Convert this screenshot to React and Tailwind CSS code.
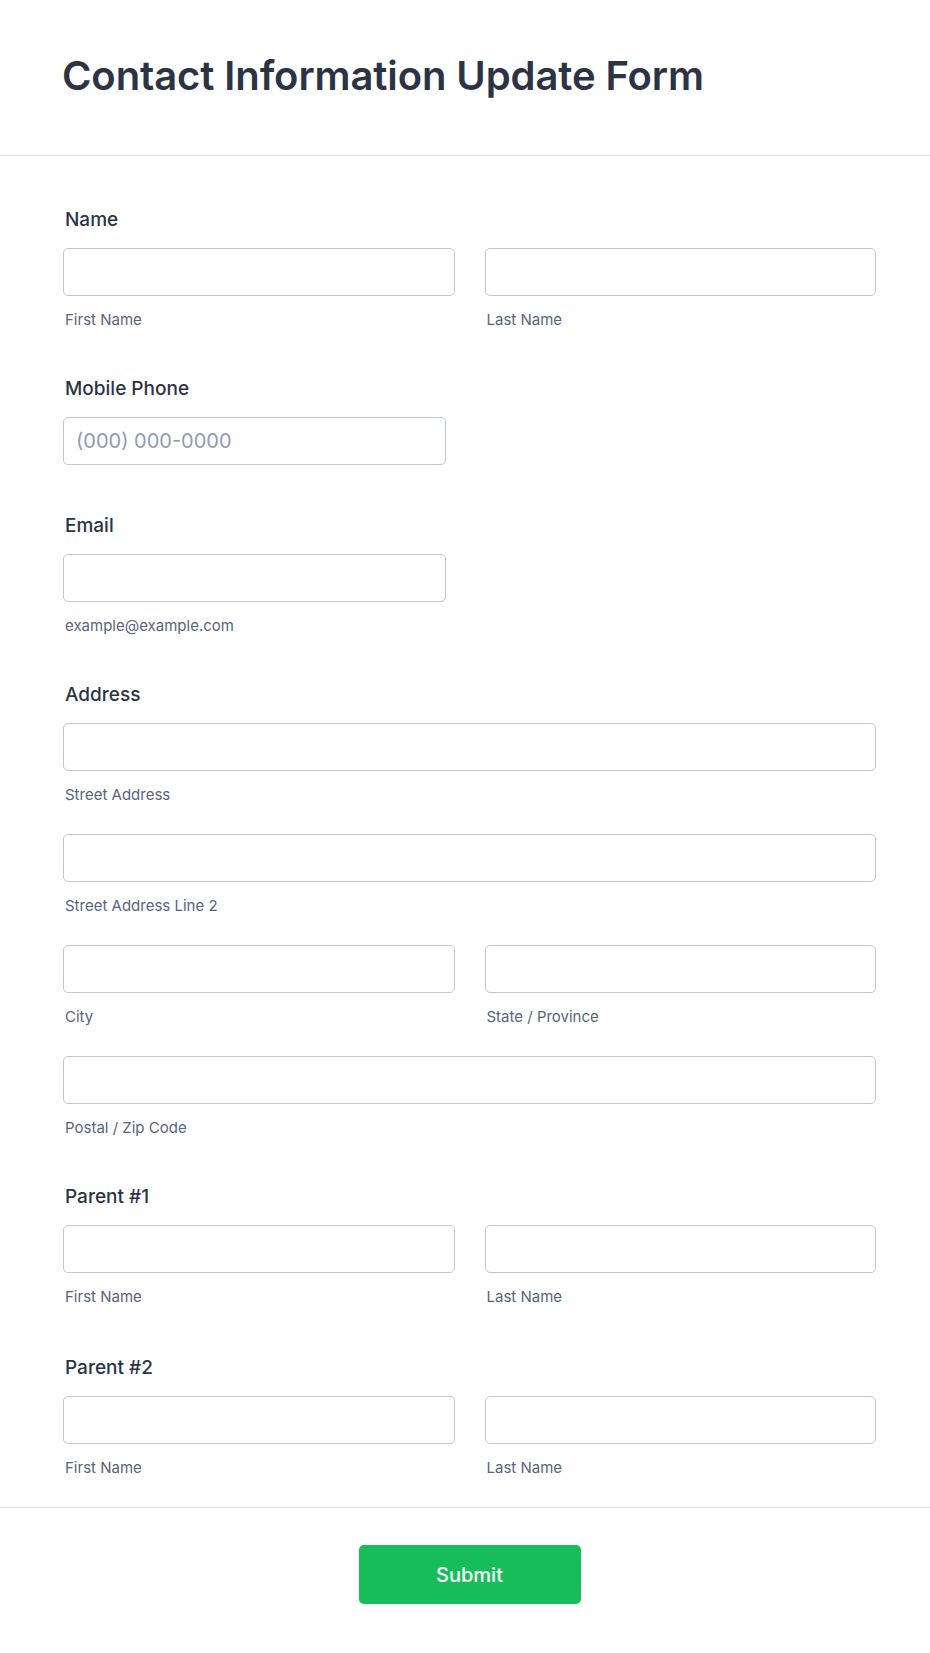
import React from "react";

const TextInput = ({ placeholder, className = "" }) => (
  <input
    type="text"
    placeholder={placeholder}
    className={`block h-[48px] w-full rounded-[5px] border border-[#bfc6d4] bg-white px-3 text-[20px] text-[#2c3345] placeholder:text-[#8f9bb3] outline-none ${className}`}
  />
);

const SubLabel = ({ children }) => (
  <div className="mt-[14px] pl-[2px] text-[15px] leading-[20px] text-[#57647e]">
    {children}
  </div>
);

const Label = ({ children }) => (
  <div className="mb-[16px] pt-[3px] pl-[2px] text-[19px] font-medium leading-[24px] text-[#2c3345]">
    {children}
  </div>
);

const TwoCol = ({ left, right }) => (
  <div className="grid grid-cols-2 gap-x-[30px]">
    <div>
      <TextInput />
      <SubLabel>{left}</SubLabel>
    </div>
    <div>
      <TextInput />
      <SubLabel>{right}</SubLabel>
    </div>
  </div>
);

const App = () => {
  return (
    <div
      className="min-h-screen w-full bg-white"
      style={{ fontFamily: "Inter, 'Noto Sans', sans-serif" }}
    >
      <header className="border-b border-[#e3e5ee] pl-[62px] pr-[54px] pt-[52px] pb-[55px]">
        <h1 className="text-[40px] font-semibold leading-[48px] tracking-[-0.1px] text-[#2c3345]">
          Contact Information Update Form
        </h1>
      </header>

      <form
        className="flex flex-col gap-[44px] pl-[63px] pr-[54px] pt-[49px] pb-[29px]"
        onSubmit={(e) => e.preventDefault()}
      >
        <section>
          <Label>Name</Label>
          <TwoCol left="First Name" right="Last Name" />
        </section>

        <section>
          <Label>Mobile Phone</Label>
          <TextInput placeholder="(000) 000-0000" className="!w-[383px]" />
        </section>

        <section className="mt-[2px]">
          <Label>Email</Label>
          <TextInput className="!w-[383px]" />
          <SubLabel>example@example.com</SubLabel>
        </section>

        <section>
          <Label>Address</Label>
          <div className="flex flex-col gap-[29px]">
            <div>
              <TextInput />
              <SubLabel>Street Address</SubLabel>
            </div>
            <div>
              <TextInput />
              <SubLabel>Street Address Line 2</SubLabel>
            </div>
            <TwoCol left="City" right="State / Province" />
            <div>
              <TextInput />
              <SubLabel>Postal / Zip Code</SubLabel>
            </div>
          </div>
        </section>

        <section>
          <Label>Parent #1</Label>
          <TwoCol left="First Name" right="Last Name" />
        </section>

        <section className="mt-[2px]">
          <Label>Parent #2</Label>
          <TwoCol left="First Name" right="Last Name" />
        </section>
      </form>

      <footer className="flex justify-center border-t border-[#e3e5ee] pl-[9px] pt-[37px] pb-[50px]">
        <button
          type="button"
          className="h-[59px] w-[222px] rounded-[5px] bg-[#18bd5b] text-[20px] font-medium text-white"
        >
          Submit
        </button>
      </footer>
    </div>
  );
};

export default App;
